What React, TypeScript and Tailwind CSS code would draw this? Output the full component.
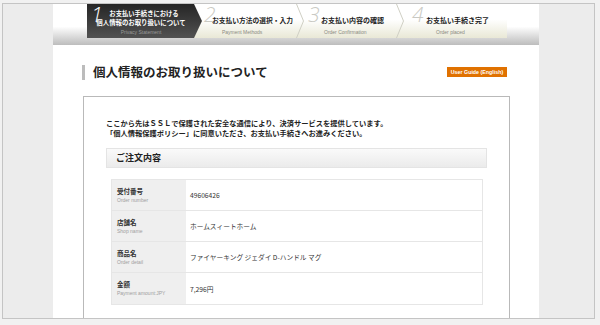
import React from 'react';

type Row = { label: string; sub: string; value: string };

const rows: Row[] = [
  { label: '受付番号', sub: 'Order number', value: '49606426' },
  { label: '店舗名', sub: 'Shop name', value: 'ホームスィートホーム' },
  { label: '商品名', sub: 'Order detail', value: 'ファイヤーキング ジェダイ D-ハンドル マグ' },
  { label: '金額', sub: 'Payment amount:JPY', value: '7,296円' },
];

const Chevron: React.FC = () => (
  <svg className="absolute right-0 top-0" width="8" height="34" viewBox="0 0 8 34">
    <polyline points="0.5,0 7.5,17 0.5,34" fill="none" stroke="#cfcfc4" strokeWidth="1" />
  </svg>
);

const Numeral: React.FC<{ n: string; left: string; light?: boolean }> = ({ n, left, light }) => (
  <span
    className={`absolute top-[-2px] ${left} font-['Open_Sans',sans-serif] italic font-light text-[21px] leading-[24px] ${
      light ? 'text-white' : 'text-[#c9c9c3]'
    }`}
  >
    {n}
  </span>
);

const StepBar: React.FC = () => (
  <div className="ml-[34px] w-[420px] h-[34px] flex bg-gradient-to-b from-white from-45% to-[#e9e8d6]">
    {/* step 1, current */}
    <div className="relative w-[115px] h-full [clip-path:polygon(0_0,107px_0,115px_50%,107px_100%,0_100%)] bg-gradient-to-b from-[#262626] to-[#525252]">
      <Numeral n="1" left="left-[4px]" light />
      <div className="w-[108px] pt-[5px] flex flex-col items-center">
        <span className="pl-[6px] text-[6.3px] leading-[9px] font-bold text-white">お支払い手続きにおける</span>
        <span className="text-[6.4px] leading-[9px] font-bold text-white">個人情報のお取り扱いについて</span>
        <span className="text-[5px] leading-[10px] text-[#9a9a9a] font-['Liberation_Sans',sans-serif]">Privacy Statement</span>
      </div>
    </div>
    {/* step 2 */}
    <div className="relative w-[102px] h-full">
      <Numeral n="2" left="left-[2px]" />
      <div className="pt-[11px] pl-[10px] text-[6.75px] leading-[10px] font-bold text-[#222]">お支払い方法の選択・入力</div>
      <div className="pl-[20px] pt-[4px] text-[5px] leading-[6px] text-[#8a8a80] font-['Liberation_Sans',sans-serif]">Payment Methods</div>
      <Chevron />
    </div>
    {/* step 3 */}
    <div className="relative w-[100px] h-full">
      <Numeral n="3" left="left-[4px]" />
      <div className="pt-[11px] pl-[17px] text-[7px] leading-[10px] font-bold text-[#222]">お支払い内容の確認</div>
      <div className="pl-[20px] pt-[4px] text-[5px] leading-[6px] text-[#8a8a80] font-['Liberation_Sans',sans-serif]">Order Confirmation</div>
      <Chevron />
    </div>
    {/* step 4 */}
    <div className="relative w-[103px] h-full">
      <Numeral n="4" left="left-[8px]" />
      <div className="pt-[11px] pl-[22px] text-[7px] leading-[10px] font-bold text-[#222]">お支払い手続き完了</div>
      <div className="pl-[32px] pt-[4px] text-[5px] leading-[6px] text-[#8a8a80] font-['Liberation_Sans',sans-serif]">Order placed</div>
    </div>
  </div>
);

const App: React.FC = () => {
  return (
    <div className="w-[600px] h-[325px] bg-[#f1f1f1] pt-[3px] pl-[2px] overflow-hidden font-['Noto_Sans_CJK_JP',sans-serif]">
      <div className="w-[593px] h-[316px] border border-[#c4c4c4] bg-[#ececec] pl-[50px] overflow-hidden">
        <div className="w-[486px] h-full bg-white flex flex-col">
          <div className="h-[41px] shrink-0 bg-gradient-to-b from-white from-55% to-[#bdbdbd]">
            <StepBar />
          </div>

          <div className="mt-[19px] pl-[29px] pr-[32px] h-[16px] shrink-0 flex items-center justify-between">
            <div className="flex items-center">
              <span className="w-[3px] h-[15px] bg-[#bcbcbc]" />
              <h1 className="ml-[8px] text-[12.5px] leading-[16px] font-bold text-[#222]">個人情報のお取り扱いについて</h1>
            </div>
            <span className="w-[60px] h-[10px] bg-[#e07100] text-white text-[5.3px] leading-[10px] font-bold text-center font-['Liberation_Sans',sans-serif]">
              User Guide (English)
            </span>
          </div>

          <div className="mt-[16px] ml-[30px] w-[427px] shrink-0 border border-[#b9b9b9] px-[22px] pt-[21px] pb-[20px]">
            <p className="text-[7.25px] leading-[10px] font-bold text-[#222] whitespace-nowrap">
              ここから先はＳＳＬで保護された安全な通信により、決済サービスを提供しています。
            </p>
            <p className="text-[7.25px] leading-[10px] font-bold text-[#222] whitespace-nowrap">
              「個人情報保護ポリシー」に同意いただき、お支払い手続きへお進みください。
            </p>

            <div className="mt-[10px] h-[20px] border border-[#e4e4e4] bg-gradient-to-b from-[#fafafa] to-[#ebebeb] pl-[9px] flex items-center">
              <h2 className="text-[9px] leading-[12px] font-bold text-[#222]">ご注文内容</h2>
            </div>

            <div className="mt-[11px] ml-[5px] w-[372px] border border-[#e6e6e6]">
              {rows.map((r, i) => (
                <div key={r.label} className={`flex h-[31px] ${i < rows.length - 1 ? 'border-b border-[#e6e6e6]' : ''}`}>
                  <div className="w-[74px] bg-[#efefef] pl-[5px] flex flex-col justify-center">
                    <span className="text-[6.5px] leading-[9px] font-bold text-[#333]">{r.label}</span>
                    <span className="text-[5px] leading-[8px] text-[#a0a0a0] font-['Liberation_Sans',sans-serif]">{r.sub}</span>
                  </div>
                  <div className="flex-1 pl-[4px] flex items-center text-[6.7px] leading-[10px] text-[#333]">{r.value}</div>
                </div>
              ))}
            </div>
          </div>
        </div>
      </div>
    </div>
  );
};

export default App;
